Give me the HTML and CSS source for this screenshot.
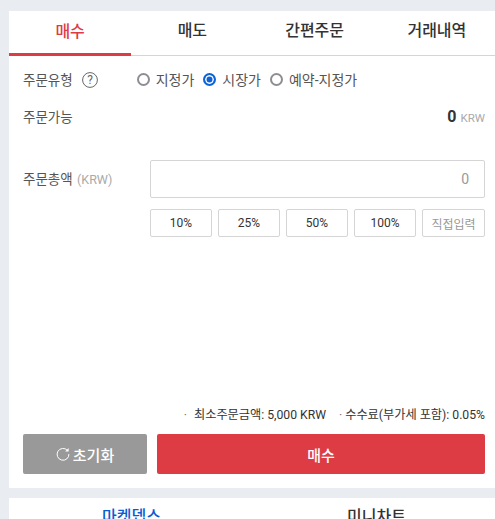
FILE: index.html
```html
<!DOCTYPE html>
<html lang="ko">
<head>
<meta charset="utf-8">
<title>주문</title>
<link rel="stylesheet" href="styles.css">
</head>
<body>
<section class="panel order">
  <nav class="tabs">
    <a class="tab active">매수</a>
    <a class="tab">매도</a>
    <a class="tab">간편주문</a>
    <a class="tab">거래내역</a>
  </nav>
  <div class="body">
    <div class="row type-row">
      <span class="label">주문유형</span>
      <svg class="help" viewBox="0 0 16 16" width="16" height="16"><circle cx="8" cy="8" r="7.4" fill="none" stroke="#666" stroke-width="1"/><text x="8" y="12.2" text-anchor="middle" class="help-q">?</text></svg>
      <div class="radios">
        <span class="radio"><i class="dot"></i>지정가</span>
        <span class="radio on"><i class="dot"></i>시장가</span>
        <span class="radio"><i class="dot"></i>예약-지정가</span>
      </div>
    </div>
    <div class="row avail-row">
      <span class="label">주문가능</span>
      <span class="avail"><b>0</b><small>KRW</small></span>
    </div>
    <div class="row total-row">
      <span class="label total-label">주문총액 <small>(KRW)</small></span>
      <div class="input">0</div>
    </div>
    <div class="pcts">
      <button class="pct">10%</button>
      <button class="pct">25%</button>
      <button class="pct">50%</button>
      <button class="pct">100%</button>
      <button class="pct direct">직접입력</button>
    </div>
    <div class="spacer"></div>
    <div class="notes">
      <span class="note">최소주문금액: 5,000 KRW</span>
      <span class="note">수수료(부가세 포함): 0.05%</span>
    </div>
    <div class="actions">
      <button class="btn reset"><svg viewBox="0 0 14 14" width="14" height="14"><path d="M11.4 3.4A5.9 5.9 0 1 0 12.9 7" fill="none" stroke="#fff" stroke-width="1"/><path d="M12.6 1v3.4H9.2z" fill="#fff"/></svg>초기화</button>
      <button class="btn buy">매수</button>
    </div>
  </div>
</section>
<section class="panel lower">
  <a class="lower-tab sel">마켓뎁스</a>
  <a class="lower-tab">미니차트</a>
</section>
</body>
</html>
```
FILE: styles.css
```css
* { box-sizing: border-box; }
html, body { height: 100%; }
body {
  margin: 0;
  padding: 1px 0 0 9px;
  overflow: hidden;
  background: #e9ecf1;
  color: #333;
  font: 13px/1.2 Roboto, "Noto Sans CJK KR", sans-serif;
}
.panel { background: #fff; }
.order { margin-top: 10px; height: 477px; display: flex; flex-direction: column; }
.tabs { display: flex; height: 45px; margin-right: -3px; border-bottom: 1px solid #d5d5d5; }
.tab {
  flex: 1;
  display: flex;
  align-items: center;
  justify-content: center;
  padding-bottom: 4px;
  font-size: 16px;
  font-weight: 500;
  color: #333;
}
.tab.active { color: #dd3c44; border-bottom: 3px solid #dd3c44; margin-bottom: -1px; padding-bottom: 1px; }
.body { flex: 1; display: flex; flex-direction: column; padding: 0 10px 14px 14px; }
.row { display: flex; align-items: center; }
.label { font-size: 13.5px; color: #555; }
.type-row { height: 48px; }
.help { margin-left: 9px; flex: none; }
.help-q { font-size: 12px; fill: #666; }
.radios { display: flex; margin-left: 39px; gap: 9px; }
.radio { display: flex; align-items: center; font-size: 14px; color: #555; }
.dot { width: 13px; height: 13px; border: 2px solid #8d8d94; border-radius: 50%; margin-right: 6px; }
.radio.on .dot { border-color: #0f62d6; background: #0f62d6; box-shadow: inset 0 0 0 1.5px #fff; }
.avail-row { height: 26px; justify-content: space-between; }
.avail { display: flex; align-items: baseline; }
.avail b { font-size: 16px; font-weight: 700; color: #333; }
.avail small { font-size: 11.5px; color: #aaa; margin-left: 4px; }
.total-row { margin-top: 30px; height: 38px; }
.total-label { width: 127px; flex: none; }
.total-label small { font-size: 12.5px; color: #aaa; margin-left: 1px; }
.input {
  flex: 1;
  height: 38px;
  border: 1px solid #d5d5d5;
  border-radius: 2px;
  display: flex;
  align-items: center;
  justify-content: flex-end;
  padding-right: 15px;
  font-size: 14px;
  color: #999;
}
.pcts { display: flex; gap: 6px; margin: 11px 0 0 127px; }
.pct {
  width: 62px;
  height: 28px;
  padding: 0;
  background: #fff;
  border: 1px solid #d5d5d5;
  border-radius: 2px;
  font: 12px Roboto, "Noto Sans CJK KR", sans-serif;
  color: #333;
}
.pct.direct { width: 63px; color: #999; }
.spacer { flex: 1; }
.notes { display: flex; justify-content: flex-end; gap: 13px; font-size: 12.2px; color: #333; }
.note::before { content: "·"; color: #777; margin-right: 7px; }
.note:last-child::before { margin-right: 3px; }
.actions { display: flex; gap: 10px; margin-top: 11px; }
.btn {
  height: 40px;
  border: 0;
  border-radius: 2px;
  color: #fff;
  font: 500 15px Roboto, "Noto Sans CJK KR", sans-serif;
  display: flex;
  align-items: center;
  justify-content: center;
}
.reset { width: 124px; background: #999; gap: 3px; }
.buy { flex: 1; background: #dd3c44; }
.lower { margin-top: 10px; margin-right: -4px; height: 60px; display: flex; }
.lower-tab {
  flex: 1;
  padding-top: 9px;
  text-align: center;
  font-size: 16px;
  font-weight: 500;
  color: #333;
}
.lower-tab.sel { color: #0a5cd0; }
```
